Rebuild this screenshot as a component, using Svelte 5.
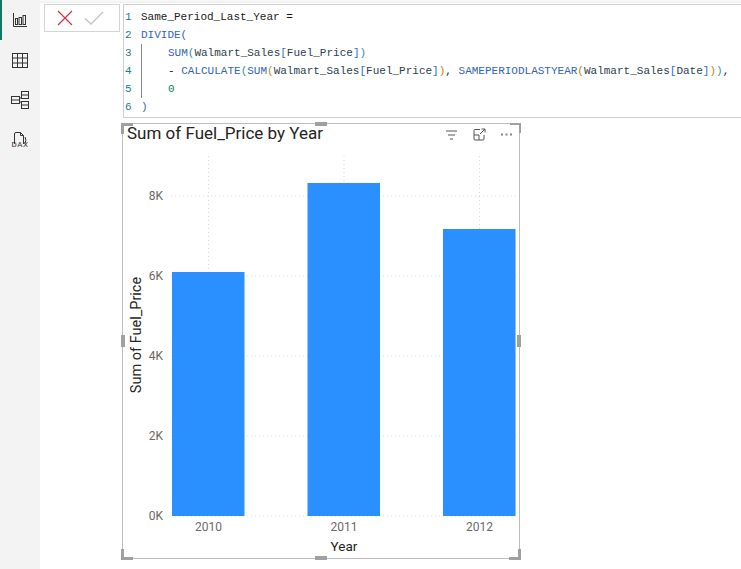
<script>
    const bars = [
        { year: "2010", x: 49, y: 122, cx: 85.5 },
        { year: "2011", x: 184.5, y: 33, cx: 221 },
        { year: "2012", x: 320, y: 79, cx: 356.5 }
    ];
    const ticks = [
        { label: "8K", y: 46 },
        { label: "6K", y: 126 },
        { label: "4K", y: 206 },
        { label: "2K", y: 286 },
        { label: "0K", y: 366 }
    ];
    const baseY = 366;
</script>

<div class="page">
    <aside class="sidebar">
        <div class="nav active">
            <svg width="14" height="14" viewBox="0 0 14 14" fill="none" stroke="#333" stroke-width="1">
                <path d="M0.5 0v13.500h13.500" />
                <rect x="2.500" y="5.500" width="2" height="6" />
                <rect x="6" y="4.500" width="2.500" height="7" />
                <rect x="10" y="2.500" width="2.500" height="9" />
            </svg>
        </div>
        <div class="nav">
            <svg width="16" height="15" viewBox="0 0 16 15" fill="none" stroke="#333" stroke-width="1">
                <rect x="0.500" y="0.500" width="15" height="14" />
                <path d="M0.500 5h15M0.500 10h15M5.500 0.500v14M10.500 0.500v14" />
            </svg>
        </div>
        <div class="nav">
            <svg width="18" height="18" viewBox="0 0 18 18" fill="none" stroke="#333" stroke-width="1">
                <rect x="0.500" y="5.500" width="8" height="7" />
                <path d="M0.500 9h8" />
                <rect x="10.500" y="0.500" width="7" height="7" />
                <path d="M10.500 4h7" />
                <rect x="10.500" y="10.500" width="7" height="7" />
                <path d="M10.500 14h7M8.500 7h2M8.500 11h2" />
            </svg>
        </div>
        <div class="nav dax">
            <svg width="14" height="12" viewBox="0 0 14 12" fill="none" stroke="#333" stroke-width="1">
                <path d="M1.500 12V2a1.500 1.500 0 0 1 1.500-1.500h4.500l3 3V12M7.500 0.500v3h3" />
                <path d="M12 5q1.800 3 0 6.500" />
            </svg>
            <span>DAX</span>
        </div>
    </aside>

    <main class="content">
        <div class="topbar"></div>
        <div class="formula-row">
            <div class="commit-box">
                <svg width="16" height="16" viewBox="0 0 16 16" fill="none" stroke="#c8333f" stroke-width="1.200">
                    <path d="M1 1l14 14M15 1L1 15" />
                </svg>
                <svg width="20" height="14" viewBox="0 0 20 14" fill="none" stroke="#c4c4c4" stroke-width="1.400">
                    <path d="M1 7.500l6 5.500L19 1" />
                </svg>
            </div>
            <div class="editor">
                <div class="line"><span class="ln">1</span><span class="code">Same_Period_Last_Year =</span></div>
                <div class="line"><span class="ln">2</span><span class="code"><span class="fn">DIVIDE</span><span class="p1">(</span></span></div>
                <div class="line"><span class="ln">3</span><span class="code indent"><span class="fn">SUM</span><span class="p2">(</span><span class="tbl">Walmart_Sales</span><span class="p4">[</span><span class="tbl">Fuel_Price</span><span class="p4">]</span><span class="p2">)</span></span></div>
                <div class="line"><span class="ln">4</span><span class="code indent">- <span class="fn">CALCULATE</span><span class="p2">(</span><span class="fn">SUM</span><span class="p3">(</span><span class="tbl">Walmart_Sales</span><span class="p4">[</span><span class="tbl">Fuel_Price</span><span class="p4">]</span><span class="p3">)</span>, <span class="fn">SAMEPERIODLASTYEAR</span><span class="p3">(</span><span class="tbl">Walmart_Sales</span><span class="p4">[</span><span class="tbl">Date</span><span class="p4">]</span><span class="p3">)</span><span class="p2">)</span>,</span></div>
                <div class="line"><span class="ln">5</span><span class="code indent"><span class="num">0</span></span></div>
                <div class="line"><span class="ln">6</span><span class="code"><span class="p1">)</span></span></div>
            </div>
        </div>

        <section class="visual">
            <div class="visual-head">
                <h2>Sum of Fuel_Price by Year</h2>
                <div class="actions">
                    <svg width="13" height="12" viewBox="0 0 13 12" fill="none" stroke="#555" stroke-width="1">
                        <path d="M1 2h11M3 6h7M5 10h3" />
                    </svg>
                    <svg width="13" height="13" viewBox="0 0 13 13" fill="none" stroke="#555" stroke-width="1">
                        <path d="M7 1.500h-5a1 1 0 0 0-1 1v8.500a1 1 0 0 0 1 1h8a1 1 0 0 0 1-1V7M1 7h5v5M7 6l5-5M8.500 1H12v3.500" />
                    </svg>
                    <svg width="11" height="3" viewBox="0 0 11 3" fill="#888">
                        <rect x="0" y="0.500" width="2" height="2" />
                        <rect x="4.500" y="0.500" width="2" height="2" />
                        <rect x="9" y="0.500" width="2" height="2" />
                    </svg>
                </div>
            </div>
            <svg class="chart" width="396" height="406" viewBox="0 0 396 406">
                {#each ticks as t}
                    <line class="grid" x1="48" x2="396" y1={t.y} y2={t.y} />
                    <text class="axis" x="40" y={t.y + 3.500} text-anchor="end">{t.label}</text>
                {/each}
                {#each bars as b}
                    <line class="grid" x1={b.cx} x2={b.cx} y1="6" y2={baseY} />
                    <rect class="bar" x={b.x} y={b.y} width="72.500" height={baseY - b.y} />
                    <text class="axis" x={b.cx} y={baseY + 14.500} text-anchor="middle">{b.year}</text>
                {/each}
                <text class="title" x="221" y="400.500" text-anchor="middle">Year</text>
                <text class="title long" transform="translate(18 185) rotate(-90)" text-anchor="middle">Sum of Fuel_Price</text>
            </svg>

            <i class="corner tl"></i>
            <i class="corner tr"></i>
            <i class="corner bl"></i>
            <i class="corner br"></i>
            <i class="grip top"></i>
            <i class="grip bottom"></i>
            <i class="grip left"></i>
            <i class="grip right"></i>
        </section>
    </main>
</div>

<style>
    :global(body) {
        margin: 0;
        background: #fff;
    }

    .page {
        display: flex;
        width: 741px;
        height: 569px;
        overflow: hidden;
        font-family: "Roboto", "Liberation Sans", sans-serif;
    }

    .sidebar {
        width: 40px;
        flex: none;
        background: #f3f3f3;
        display: flex;
        flex-direction: column;
    }

    .nav {
        height: 40px;
        flex: none;
        display: flex;
        flex-direction: column;
        align-items: center;
        justify-content: center;
    }

    .nav.active {
        box-shadow: inset 2px 0 0 #117865;
    }

    .dax span {
        font-size: 8px;
        line-height: 7px;
        letter-spacing: 0.6px;
        margin-top: -3px;
        color: #333;
    }

    .content {
        flex: 1;
        min-width: 0;
    }

    .topbar {
        height: 3px;
        background: linear-gradient(#fafafa, #f0f0f0);
    }

    .formula-row {
        display: flex;
        align-items: flex-start;
        padding: 1px 0 0 4px;
        gap: 3px;
    }

    .commit-box {
        width: 76px;
        height: 28px;
        border: 1px solid #d5d5d5;
        display: flex;
        align-items: center;
        gap: 11px;
        padding-left: 12px;
        box-sizing: border-box;
    }

    .editor {
        flex: 1;
        height: 114px;
        box-sizing: border-box;
        border: 1px solid #cfcfcf;
        border-right: 0;
        padding-top: 3px;
        font-family: "Liberation Mono", monospace;
        font-size: 11px;
        color: #1a1a1a;
    }

    .line {
        display: flex;
        height: 18px;
        line-height: 18px;
    }

    .ln {
        width: 17px;
        flex: none;
        padding-left: 1px;
        box-sizing: border-box;
        color: #237893;
    }

    .code {
        white-space: pre;
    }

    .indent {
        padding-left: 27px;
        background: linear-gradient(#8a8a8a, #8a8a8a) no-repeat 0 0 / 1px 100%;
    }

    .fn { color: #3165bb; }
    .tbl { color: #2b3f4f; }
    .num { color: #098658; }
    .p1 { color: #3165bb; }
    .p2 { color: #2f8f9f; }
    .p3 { color: #c18401; }
    .p4 { color: #2f6fd0; }

    .visual {
        position: relative;
        width: 398px;
        height: 436px;
        margin: 5px 0 0 82px;
        box-sizing: border-box;
        border: 1px solid #bdbdbd;
        background: #fff;
    }

    .visual-head {
        display: flex;
        justify-content: space-between;
        align-items: center;
        height: 21px;
        padding: 0 7px 0 4px;
    }

    h2 {
        margin: -4px 0 0;
        font-size: 17px;
        font-weight: 400;
        color: #252423;
    }

    .actions {
        display: flex;
        align-items: center;
        gap: 15px;
    }

    .chart {
        display: block;
        margin-top: 5px;
    }

    .grid {
        stroke: #d9d9d9;
        stroke-width: 1;
        stroke-dasharray: 1 3;
    }

    .bar {
        fill: #2b90ff;
    }

    .axis {
        font-size: 12px;
        fill: #6b6967;
    }

    .title {
        font-size: 13.500px;
        fill: #252423;
    }

    .title.long {
        font-size: 14.500px;
    }

    .corner {
        position: absolute;
        width: 9px;
        height: 8px;
        border: 0 solid #a0a0a0;
    }

    .corner.tl { left: -2px; top: -1px; border-width: 3px 0 0 3px; }
    .corner.tr { right: -2px; top: -1px; border-width: 2px 2px 0 0; }
    .corner.bl { left: -2px; bottom: -2px; border-width: 0 0 3px 3px; }
    .corner.br { right: -2px; bottom: -2px; border-width: 0 3px 3px 0; }

    .grip {
        position: absolute;
        background: #a0a0a0;
    }

    .grip.top { left: 192px; top: -2px; width: 12px; height: 4px; }
    .grip.bottom { left: 192px; bottom: -2px; width: 12px; height: 4px; }
    .grip.left { left: -2px; top: 211px; width: 4px; height: 12px; }
    .grip.right { right: -2px; top: 211px; width: 4px; height: 12px; }
</style>
